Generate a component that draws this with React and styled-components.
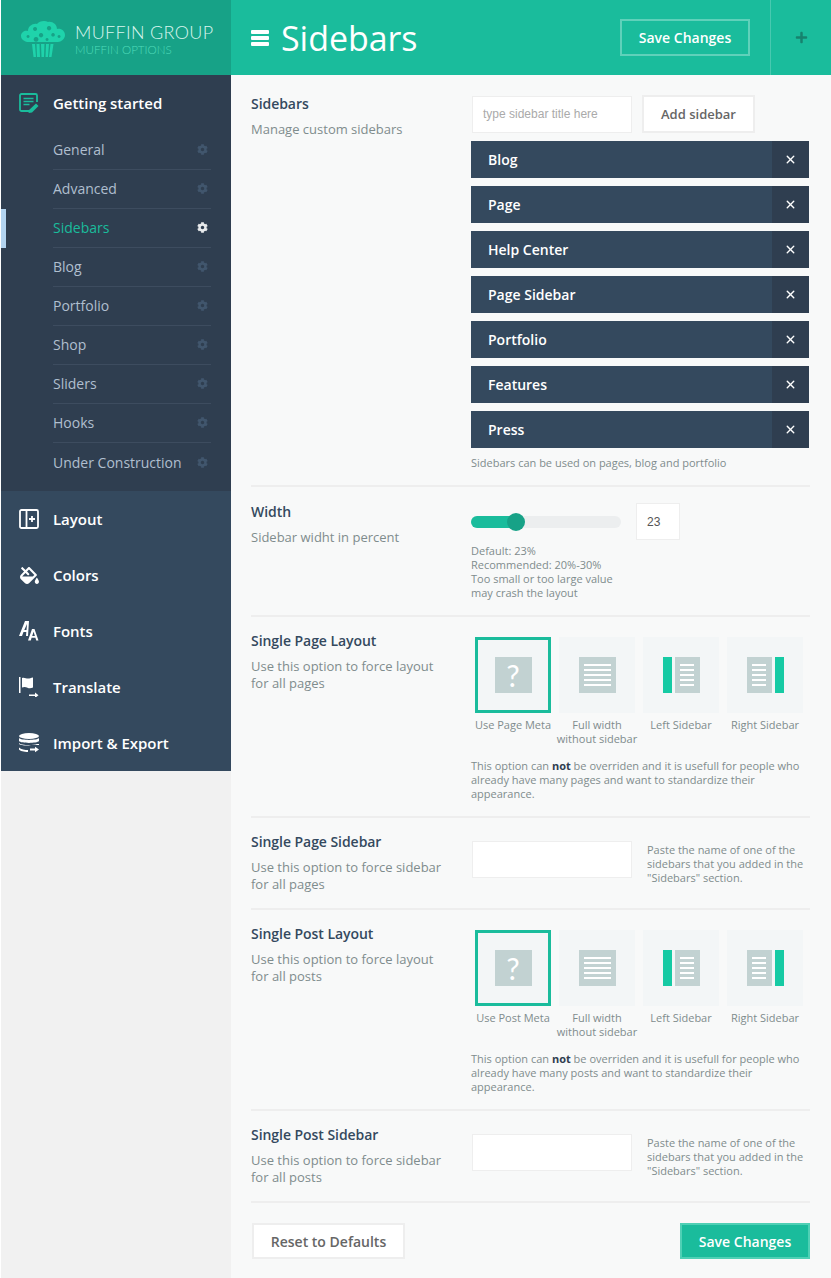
import React from 'react';
import styled, { createGlobalStyle } from 'styled-components';
import { FaCog, FaFillDrip, FaPlus } from 'react-icons/fa';
import { X } from 'lucide-react';

const GlobalStyle = createGlobalStyle`
  html, body { margin: 0; padding: 0; background: #fff; }
  body { font-family: "Open Sans", "Liberation Sans", sans-serif; }
  * { box-sizing: border-box; }
`;

const Page = styled.div`
  display: flex;
  width: 831px;
  height: 1278px;
  padding-left: 1px;
  overflow: hidden;
`;

const Sidebar = styled.aside`
  width: 230px;
  flex-shrink: 0;
  background: #f1f1f1;
`;

const Logo = styled.div`
  height: 75px;
  background: #17a287;
  display: flex;
  align-items: center;
  padding-left: 19px;
`;

const LogoText = styled.div`
  margin-left: 9px;
  margin-top: 3px;
  display: flex;
  flex-direction: column;
`;

const LogoTitle = styled.span`
  font-family: "Lato", sans-serif;
  font-weight: 300;
  font-size: 18px;
  line-height: 21px;
  letter-spacing: 0.3px;
  color: #d9f5ee;
  white-space: nowrap;
`;

const LogoSub = styled.span`
  font-family: "Lato", sans-serif;
  font-weight: 300;
  font-size: 11.6px;
  line-height: 14px;
  color: #4fdcba;
  white-space: nowrap;
`;

const ActiveGroup = styled.div`
  background: #2f3e50;
  height: 416px;
  position: relative;
`;

const MenuHead = styled.div`
  height: 56px;
  display: flex;
  align-items: center;
  padding-left: 18px;
  gap: 14px;
  font-size: 15px;
  font-weight: 600;
  letter-spacing: -0.03px;
  color: #fff;
  background: ${(p) => (p.$active ? '#2f3e50' : '#34495e')};
`;

const MenuIcon = styled.span`
  width: 20px;
  height: 20px;
  display: flex;
  align-items: center;
  justify-content: center;
  color: ${(p) => (p.$active ? '#1abc9c' : '#fff')};
`;

const SubList = styled.ul`
  list-style: none;
  margin: 0;
  padding: 0 20px 0 52px;
`;

const SubItem = styled.li`
  height: 39px;
  display: flex;
  align-items: center;
  justify-content: space-between;
  padding-right: 3px;
  padding-bottom: 1px;
  font-size: 14px;
  color: ${(p) => (p.$active ? '#1abc9c' : '#b0bfcf')};
  border-bottom: ${(p) => (p.$last ? 'none' : '1px solid #3d4c5f')};
  svg {
    font-size: 11px;
    color: ${(p) => (p.$active ? '#e8eaec' : '#41566d')};
  }
`;

const ActiveMarker = styled.span`
  position: absolute;
  left: 0;
  top: 134px;
  width: 5px;
  height: 39px;
  background: #b3d4f0;
`;

const Main = styled.main`
  flex: 1;
  min-width: 0;
  background: #f8f9f9;
  display: flex;
  flex-direction: column;
`;

const Header = styled.header`
  height: 75px;
  background: #1abc9c;
  display: flex;
  align-items: center;
  padding-left: 20px;
  color: #fff;
`;

const Hamburger = styled.span`
  width: 18px;
  display: flex;
  flex-direction: column;
  gap: 2px;
  i {
    display: block;
    height: 4px;
    border-radius: 1px;
    background: #fff;
  }
`;

const PageTitle = styled.h1`
  margin: 0 0 0 12px;
  font-size: 34px;
  font-weight: 400;
  letter-spacing: -0.05px;
  flex: 1;
  color: #fff;
`;

const HeaderPlus = styled.div`
  width: 61px;
  height: 75px;
  margin-left: 20px;
  border-left: 1px solid #48c9b0;
  display: flex;
  align-items: center;
  justify-content: center;
  color: #17826e;
  font-size: 13px;
`;

const Button = styled.button`
  height: ${(p) => p.$h || 37}px;
  font-family: inherit;
  font-size: ${(p) => p.$size || 14}px;
  font-weight: 600;
  padding: 0;
  width: ${(p) => p.$w}px;
  border: 2px solid ${(p) => p.$border};
  background: ${(p) => p.$bg};
  color: ${(p) => p.$color};
`;

const Body = styled.div`
  padding: 0 21px 0 20px;
`;

const Row = styled.section`
  display: grid;
  grid-template-columns: 220px minmax(0, 1fr);
  height: ${(p) => p.$h}px;
  padding-top: ${(p) => p.$top || 0}px;
  border-bottom: 2px solid #eeeeee;
`;

const Label = styled.div`
  display: flex;
  flex-direction: column;
`;

const LabelTitle = styled.div`
  font-size: 14px;
  font-weight: 600;
  line-height: 20px;
  color: #34495e;
  letter-spacing: -0.05px;
`;

const LabelDesc = styled.div`
  margin-top: 7px;
  font-size: 13px;
  line-height: 17px;
  color: #7f8c8d;
`;

const Control = styled.div`
  display: flex;
  flex-direction: column;
  align-items: flex-start;
  margin-top: ${(p) => p.$top || 0}px;
`;

const InputLine = styled.div`
  display: flex;
  align-items: center;
  gap: 10px;
  margin-left: 1px;
  height: 38px;
`;

const NameField = styled.div`
  display: flex;
  align-items: flex-start;
  gap: 15px;
  margin: 9px 0 0 1px;
`;

const TextBox = styled.div`
  width: ${(p) => p.$w || 160}px;
  height: 37px;
  background: #fff;
  border: 1px solid #eeeeee;
  display: flex;
  align-items: center;
  padding-left: ${(p) => p.$pad || 10}px;
  font-family: "Liberation Sans", sans-serif;
  font-size: 12px;
  color: ${(p) => p.$color || '#aaaaaa'};
  flex-shrink: 0;
`;

const SidebarList = styled.div`
  margin-top: 8px;
  width: 338px;
  display: flex;
  flex-direction: column;
  gap: 8px;
`;

const SidebarEntry = styled.div`
  height: 37px;
  background: #34495e;
  display: flex;
  align-items: center;
  justify-content: space-between;
  padding-left: 17px;
  color: #fff;
  font-size: 14px;
  font-weight: 600;
`;

const EntryClose = styled.span`
  width: 37px;
  height: 37px;
  background: #2f3e50;
  display: flex;
  align-items: center;
  justify-content: center;
`;

const Help = styled.div`
  font-size: 11px;
  line-height: 14px;
  color: #7f8c8d;
  margin-top: ${(p) => p.$top || 0}px;
  width: ${(p) => p.$w || 338}px;
  flex-shrink: 0;
  strong { color: #2f3e50; font-weight: 700; }
`;

const SliderLine = styled.div`
  display: flex;
  align-items: center;
  gap: 15px;
  height: 37px;
`;

const SliderTrack = styled.div`
  width: 150px;
  height: 12px;
  border-radius: 6px;
  background: #eceeef;
  position: relative;
`;

const SliderFill = styled.div`
  height: 12px;
  border-radius: 6px;
  background: #1abc9c;
`;

const SliderHandle = styled.span`
  position: absolute;
  top: -3px;
  width: 18px;
  height: 18px;
  border-radius: 50%;
  background: #17a287;
`;

const Tiles = styled.div`
  display: flex;
  gap: 8px;
  margin-left: 4px;
`;

const TileWrap = styled.div`
  width: 76px;
  display: flex;
  flex-direction: column;
  align-items: center;
`;

const Tile = styled.div`
  width: 76px;
  height: 76px;
  background: #f3f6f7;
  border: ${(p) => (p.$selected ? '3px solid #1abc9c' : 'none')};
  display: flex;
  align-items: center;
  justify-content: center;
`;

const TileLabel = styled.div`
  margin-top: 5px;
  font-size: 11px;
  line-height: 14px;
  text-align: center;
  color: #7f8c8d;
  white-space: nowrap;
`;

const TileMark = styled.span`
  font-family: "Lato", sans-serif;
  font-weight: 400;
  font-size: 30px;
  line-height: 36px;
  width: 37px;
  height: 36px;
  background: #c2d2d2;
  color: #fff;
  text-align: center;
`;

const LinesPreview = styled.span`
  width: ${(p) => p.$w}px;
  height: 36px;
  background: #c2d2d2;
  display: flex;
  flex-direction: column;
  justify-content: center;
  align-items: center;
  gap: 3px;
  i {
    display: block;
    width: ${(p) => p.$line}px;
    height: 2px;
    background: #fff;
  }
`;

const Bar = styled.span`
  width: 9px;
  height: 36px;
  background: #16caa4;
`;

const Preview = styled.span`
  display: flex;
  gap: 3px;
`;

const Footer = styled.div`
  display: flex;
  justify-content: space-between;
  padding: 20px 0 0 1px;
`;

const Muffin = () => (
  <svg width="46" height="40" viewBox="0 0 46 40" fill="#1fd3ab">
    <path
      fillRule="evenodd"
      d="M8 24c-2 0-7-2-7-6 0-4 4-6 7-5 0-5 5-8 9-7 2-3 8-4 11-2 4-1 9 2 9 7 4-1 8 2 8 6s-4 7-7 7H8zM15 9a2 2 0 1 0 .1 0zM29 8a2.2 2.2 0 1 0 .1 0zM8 17a1.5 1.5 0 1 0 .1 0zM21 15a2.2 2.2 0 1 0 .1 0zM16 19a2.4 2.4 0 1 0 .1 0zM33 15a1.8 1.8 0 1 0 .1 0zM39 17a1.5 1.5 0 1 0 .1 0zM27 20a1.5 1.5 0 1 0 .1 0z"
    />
    <path d="M12 26h3l1 13h-2.500zM16.500 26h3l.5 13h-3zM21 26h3.500l-.5 13h-2.500zM26 26h3l-1 13h-2.500zM30.500 26h3l-2 13H29z" />
  </svg>
);

const EditIcon = () => (
  <svg width="20" height="20" viewBox="0 0 20 20" fill="none" stroke="currentColor">
    <path strokeWidth="1.800" d="M12 18H2.500A1.500 1.500 0 0 1 1 16.500V2.500A1.500 1.500 0 0 1 2.500 1h14A1.500 1.500 0 0 1 18 2.500V9" />
    <path strokeWidth="1.700" d="M4.500 5.500h10M4.500 8.500h10M4.500 11.500h6" />
    <path fill="currentColor" stroke="none" d="M17 10.500l2.500 2.500-6.500 6.500-3.500 .5 .8-3.300z" />
  </svg>
);

const LayoutIcon = () => (
  <svg width="20" height="20" viewBox="0 0 20 20" fill="none" stroke="currentColor">
    <rect x="1" y="1" width="18" height="18" rx="1.500" strokeWidth="1.800" />
    <path strokeWidth="1.800" d="M7.500 1v18" />
    <path strokeWidth="1.800" d="M13 7v6M10 10h6" />
  </svg>
);

const FontsIcon = () => (
  <svg width="20" height="20" viewBox="0 0 20 20" fill="currentColor">
    <path d="M0 15L6 0h4l-1 15H7l.3-4H4.500L3 15zM5.300 9h2.200l.5-6z" />
    <path d="M9 19.500L13 8h2.500l4 11.500h-2.300l-.8-2.700h-3.800l-.8 2.700zM13.200 15h2.700l-1.300-4.300z" />
  </svg>
);

const FlagIcon = () => (
  <svg width="20" height="20" viewBox="0 0 20 20" fill="currentColor">
    <path d="M0 0h1.500v16H0z" />
    <path d="M3 1c2-1 4 .5 6 .5 1.500 0 3-.5 5-1v10c-2 1-4 1-5.500.2C7 10 5 9.500 3 10.500z" />
    <path d="M10 17.500h6v-2l3.500 2.800-3.500 2.700v-2h-6z" />
  </svg>
);

const DatabaseIcon = () => (
  <svg width="20" height="20" viewBox="0 0 20 20" fill="currentColor">
    <ellipse cx="10" cy="3" rx="10" ry="3" />
    <path d="M0 5c2 2.500 18 2.500 20 0v3c-2 2.500-18 2.500-20 0z" />
    <path d="M0 10c2 2.500 14 2.700 18 1h2v1h-8c-4 1-10 .5-12-1z" />
    <path d="M0 14.500c2 2 6 2.500 9 2.500v2c-4 0-8-1-9-2.500z" />
    <path d="M11 15.500h5V13.800l4 2.700-4 2.700v-1.700h-5z" />
  </svg>
);

const Lines = ({ w, line }) => (
  <LinesPreview $w={w} $line={line}>
    {[0, 1, 2, 3, 4].map((i) => (
      <i key={i} />
    ))}
  </LinesPreview>
);

const subItems = ['General', 'Advanced', 'Sidebars', 'Blog', 'Portfolio', 'Shop', 'Sliders', 'Hooks', 'Under Construction'];
const menuItems = [
  { title: 'Layout', icon: <LayoutIcon /> },
  { title: 'Colors', icon: <FaFillDrip size={19} /> },
  { title: 'Fonts', icon: <FontsIcon /> },
  { title: 'Translate', icon: <FlagIcon /> },
  { title: 'Import & Export', icon: <DatabaseIcon /> },
];
const sidebars = ['Blog', 'Page', 'Help Center', 'Page Sidebar', 'Portfolio', 'Features', 'Press'];
const sliderPos = 45;

const LayoutPicker = ({ metaLabel }) => (
  <Tiles>
    <TileWrap>
      <Tile $selected>
        <TileMark>?</TileMark>
      </Tile>
      <TileLabel>{metaLabel}</TileLabel>
    </TileWrap>
    <TileWrap>
      <Tile>
        <Lines w={37} line={27} />
      </Tile>
      <TileLabel>
        Full width
        <br />
        without sidebar
      </TileLabel>
    </TileWrap>
    <TileWrap>
      <Tile>
        <Preview>
          <Bar />
          <Lines w={25} line={14} />
        </Preview>
      </Tile>
      <TileLabel>Left Sidebar</TileLabel>
    </TileWrap>
    <TileWrap>
      <Tile>
        <Preview>
          <Lines w={25} line={14} />
          <Bar />
        </Preview>
      </Tile>
      <TileLabel>Right Sidebar</TileLabel>
    </TileWrap>
  </Tiles>
);

const SidebarNameField = () => (
  <NameField>
    <TextBox />
    <Help $w={162} $top={2}>
      Paste the name of one of the sidebars that you added in the "Sidebars" section.
    </Help>
  </NameField>
);

const App = () => (
  <>
    <GlobalStyle />
    <Page>
      <Sidebar>
        <Logo>
          <Muffin />
          <LogoText>
            <LogoTitle>MUFFIN GROUP</LogoTitle>
            <LogoSub>MUFFIN OPTIONS</LogoSub>
          </LogoText>
        </Logo>
        <ActiveGroup>
          <ActiveMarker />
          <MenuHead $active>
            <MenuIcon $active>
              <EditIcon />
            </MenuIcon>
            Getting started
          </MenuHead>
          <SubList>
            {subItems.map((item, i) => (
              <SubItem key={item} $active={item === 'Sidebars'} $last={i === subItems.length - 1}>
                {item}
                <FaCog />
              </SubItem>
            ))}
          </SubList>
        </ActiveGroup>
        {menuItems.map((item) => (
          <MenuHead key={item.title}>
            <MenuIcon>{item.icon}</MenuIcon>
            {item.title}
          </MenuHead>
        ))}
      </Sidebar>
      <Main>
        <Header>
          <Hamburger>
            <i />
            <i />
            <i />
          </Hamburger>
          <PageTitle>Sidebars</PageTitle>
          <Button $w={130} $border="#5fd1ba" $bg="transparent" $color="#fff">
            Save Changes
          </Button>
          <HeaderPlus>
            <FaPlus />
          </HeaderPlus>
        </Header>
        <Body>
          <Row $h={412} $top={19}>
            <Label>
              <LabelTitle>Sidebars</LabelTitle>
              <LabelDesc>Manage custom sidebars</LabelDesc>
            </Label>
            <Control $top={1}>
              <InputLine>
                <TextBox $w={160}>type sidebar title here</TextBox>
                <Button $w={113} $h={38} $size={13} $border="#eeeeee" $bg="#fff" $color="#666">
                  Add sidebar
                </Button>
              </InputLine>
              <SidebarList>
                {sidebars.map((name) => (
                  <SidebarEntry key={name}>
                    {name}
                    <EntryClose>
                      <X size={13} strokeWidth={2.6} />
                    </EntryClose>
                  </SidebarEntry>
                ))}
              </SidebarList>
              <Help $top={8}>Sidebars can be used on pages, blog and portfolio</Help>
            </Control>
          </Row>
          <Row $h={130} $top={15}>
            <Label>
              <LabelTitle>Width</LabelTitle>
              <LabelDesc>Sidebar widht in percent</LabelDesc>
            </Label>
            <Control $top={1}>
              <SliderLine>
                <SliderTrack>
                  <SliderFill style={{ width: sliderPos }} />
                  <SliderHandle style={{ left: sliderPos - 9 }} />
                </SliderTrack>
                <TextBox $w={44} $pad={10} $color="#555">
                  23
                </TextBox>
              </SliderLine>
              <Help $top={4}>
                Default: 23%
                <br />
                Recommended: 20%-30%
                <br />
                Too small or too large value
                <br />
                may crash the layout
              </Help>
            </Control>
          </Row>
          <Row $h={201} $top={14}>
            <Label>
              <LabelTitle>Single Page Layout</LabelTitle>
              <LabelDesc>
                Use this option to force layout
                <br />
                for all pages
              </LabelDesc>
            </Label>
            <Control $top={6}>
              <LayoutPicker metaLabel="Use Page Meta" />
              <Help $top={13}>
                This option can <strong>not</strong> be overriden and it is usefull for people who already have many pages and want to standardize their appearance.
              </Help>
            </Control>
          </Row>
          <Row $h={92} $top={14}>
            <Label>
              <LabelTitle>Single Page Sidebar</LabelTitle>
              <LabelDesc>
                Use this option to force sidebar
                <br />
                for all pages
              </LabelDesc>
            </Label>
            <SidebarNameField />
          </Row>
          <Row $h={201} $top={14}>
            <Label>
              <LabelTitle>Single Post Layout</LabelTitle>
              <LabelDesc>
                Use this option to force layout
                <br />
                for all posts
              </LabelDesc>
            </Label>
            <Control $top={6}>
              <LayoutPicker metaLabel="Use Post Meta" />
              <Help $top={13}>
                This option can <strong>not</strong> be overriden and it is usefull for people who already have many posts and want to standardize their appearance.
              </Help>
            </Control>
          </Row>
          <Row $h={92} $top={14}>
            <Label>
              <LabelTitle>Single Post Sidebar</LabelTitle>
              <LabelDesc>
                Use this option to force sidebar
                <br />
                for all posts
              </LabelDesc>
            </Label>
            <SidebarNameField />
          </Row>
          <Footer>
            <Button $w={153} $h={36} $border="#eeeeee" $bg="#fff" $color="#666">
              Reset to Defaults
            </Button>
            <Button $w={130} $h={36} $border="#4fd0b5" $bg="#1abc9c" $color="#fff">
              Save Changes
            </Button>
          </Footer>
        </Body>
      </Main>
    </Page>
  </>
);

export default App;
